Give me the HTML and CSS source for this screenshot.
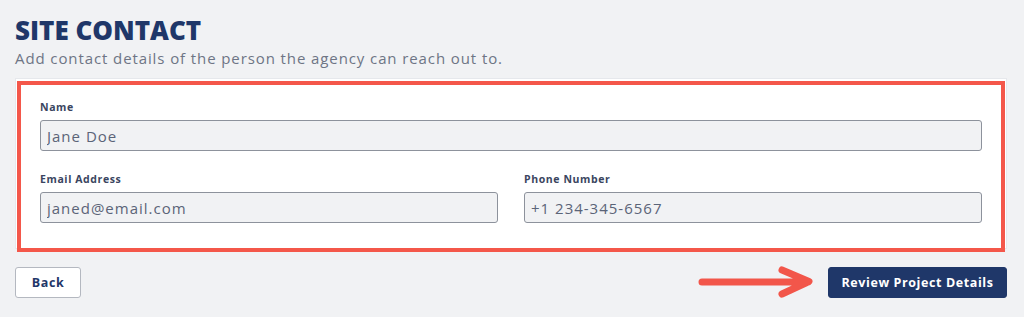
FILE: index.html
```html
<!DOCTYPE html>
<html lang="en">
<head>
    <meta charset="UTF-8">
    <title>Site Contact</title>
    <link rel="stylesheet" href="styles.css">
</head>
<body>
    <div class="page">
        <div class="page-head">
            <h1>SITE CONTACT</h1>
            <p class="subtitle">Add contact details of the person the agency can reach out to.</p>
        </div>

        <div class="card">
            <div class="field">
                <label for="name">Name</label>
                <input id="name" type="text" value="Jane Doe">
            </div>
            <div class="row">
                <div class="field">
                    <label for="email">Email Address</label>
                    <input id="email" type="text" value="janed@email.com">
                </div>
                <div class="field">
                    <label for="phone">Phone Number</label>
                    <input id="phone" type="text" value="+1 234-345-6567">
                </div>
            </div>
        </div>

        <div class="actions">
            <button class="btn-back">Back</button>
            <div class="next">
                <svg class="arrow" width="116" height="32" viewBox="0 0 116 32">
                    <path d="M4 16 H110 M84 4 L111 15.5 L84 28" fill="none" stroke="#f2564a" stroke-width="7" stroke-linecap="round" stroke-linejoin="round"/>
                </svg>
                <button class="btn-next">Review Project Details</button>
            </div>
        </div>
    </div>
</body>
</html>
```

FILE: styles.css
```css
body {
    margin: 0;
    background-color: #f1f2f4;
    font-family: "Open Sans", "DejaVu Sans", sans-serif;
    color: #3a4560;
}
.page {
    padding: 13px 17px 0 15px;
}
h1 {
    margin: 0;
    font-size: 26px;
    font-weight: 800;
    color: #1f3769;
    line-height: 34px;
}
.subtitle {
    margin: 0 0 9px;
    font-size: 15px;
    letter-spacing: 0.9px;
    color: #6e7585;
    line-height: 22px;
}
.card {
    position: relative;
    background-color: #fff;
    border: 1px solid #e6e8ec;
    padding: 21px 24px 25px;
}
.card::after {
    content: "";
    position: absolute;
    top: 2px;
    left: 1px;
    right: 1px;
    bottom: -4px;
    border: 4px solid #f4574a;
    pointer-events: none;
}
.field {
    display: flex;
    flex-direction: column;
}
.field label {
    font-size: 10.5px;
    font-weight: 700;
    letter-spacing: 0.6px;
    color: #3a4560;
    line-height: 14px;
    margin-bottom: 6px;
}
.field input {
    height: 31px;
    box-sizing: border-box;
    border: 1px solid #8d929c;
    border-radius: 3px;
    background-color: #f1f2f4;
    padding: 0 6px;
    font-family: inherit;
    font-size: 15px;
    letter-spacing: 1px;
    color: #5b6478;
}
.row {
    display: grid;
    grid-template-columns: 1fr 1fr;
    gap: 26px;
    margin-top: 21px;
}
.actions {
    display: flex;
    justify-content: space-between;
    align-items: center;
    margin-top: 17px;
}
.next {
    display: flex;
    align-items: center;
    gap: 14px;
}
button {
    height: 31px;
    border-radius: 3px;
    font-family: inherit;
    font-size: 12.5px;
    font-weight: 700;
    letter-spacing: 0.6px;
    cursor: pointer;
}
.btn-back {
    width: 66px;
    background-color: #fff;
    border: 1px solid #b4b8c0;
    color: #1f3769;
}
.btn-next {
    width: 179px;
    background-color: #1f3769;
    border: 1px solid #1f3769;
    color: #fff;
}
```
